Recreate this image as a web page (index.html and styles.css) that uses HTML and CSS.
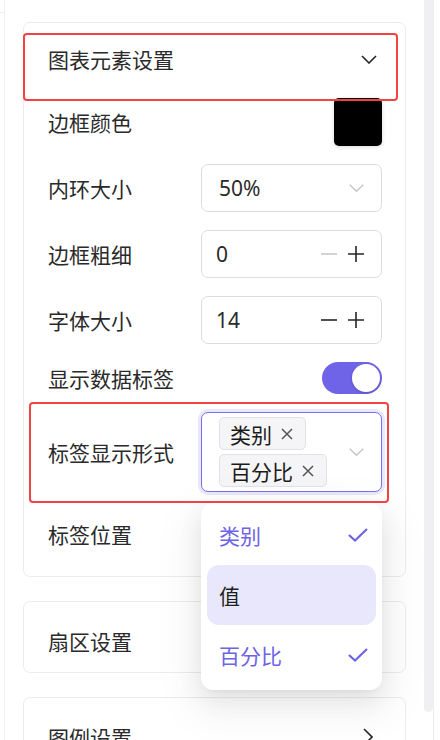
FILE: index.html
```html
<!DOCTYPE html>
<html lang="zh-CN">
<head>
<meta charset="utf-8">
<title>图表元素设置</title>
<link rel="stylesheet" href="styles.css">
</head>
<body>
<div class="app">
  <div class="gutter"></div>
  <main class="panel">
    <section class="card card-open">
      <div class="mark mark-head"></div>
      <div class="mark mark-format"></div>
      <header class="card-head">
        <span>图表元素设置</span>
        <svg class="chev-down" width="16" height="9" viewBox="0 0 16 9"><path d="M1 1 L8 8 L15 1" fill="none" stroke="#262626" stroke-width="1.6"/></svg>
      </header>
      <div class="card-body">
        <div class="row">
          <span class="label">边框颜色</span>
          <span class="swatch"></span>
        </div>
        <div class="row">
          <span class="label">内环大小</span>
          <div class="control select">
            <span>50%</span>
            <svg width="15" height="8" viewBox="0 0 15 8"><path d="M0.7 0.7 L7.5 7.3 L14.3 0.7" fill="none" stroke="#c4c4c4" stroke-width="1.3"/></svg>
          </div>
        </div>
        <div class="row">
          <span class="label">边框粗细</span>
          <div class="control stepper">
            <span>0</span>
            <span class="btns">
              <svg width="16" height="16" viewBox="0 0 16 16"><path d="M0 8 H16" stroke="#c8c8c8" stroke-width="1.6"/></svg>
              <svg width="16" height="16" viewBox="0 0 16 16"><path d="M0 8 H16 M8 0 V16" stroke="#262626" stroke-width="1.6"/></svg>
            </span>
          </div>
        </div>
        <div class="row">
          <span class="label">字体大小</span>
          <div class="control stepper">
            <span>14</span>
            <span class="btns">
              <svg width="16" height="16" viewBox="0 0 16 16"><path d="M0 8 H16" stroke="#262626" stroke-width="1.6"/></svg>
              <svg width="16" height="16" viewBox="0 0 16 16"><path d="M0 8 H16 M8 0 V16" stroke="#262626" stroke-width="1.6"/></svg>
            </span>
          </div>
        </div>
        <div class="row row-toggle">
          <span class="label">显示数据标签</span>
          <span class="switch"><span class="knob"></span></span>
        </div>
        <div class="row row-multi">
          <span class="label">标签显示形式</span>
          <div class="multi-wrap">
            <div class="control multi">
              <div class="tags">
                <span class="tag">类别<svg width="12" height="12" viewBox="0 0 12 12"><path d="M1 1 L11 11 M11 1 L1 11" stroke="#555" stroke-width="1.5"/></svg></span>
                <span class="tag">百分比<svg width="12" height="12" viewBox="0 0 12 12"><path d="M1 1 L11 11 M11 1 L1 11" stroke="#555" stroke-width="1.5"/></svg></span>
              </div>
              <svg width="15" height="8" viewBox="0 0 15 8"><path d="M0.7 0.7 L7.5 7.3 L14.3 0.7" fill="none" stroke="#c4c4c4" stroke-width="1.3"/></svg>
            </div>
            <ul class="dropdown">
              <li class="opt opt-on">类别<svg width="20" height="14" viewBox="0 0 20 14"><path d="M1 7 L7 12.5 L19 1" fill="none" stroke="#6e62e5" stroke-width="2.2"/></svg></li>
              <li class="opt opt-hover">值</li>
              <li class="opt opt-on">百分比<svg width="20" height="14" viewBox="0 0 20 14"><path d="M1 7 L7 12.5 L19 1" fill="none" stroke="#6e62e5" stroke-width="2.2"/></svg></li>
            </ul>
          </div>
        </div>
        <div class="row">
          <span class="label">标签位置</span>
        </div>
      </div>
    </section>
    <section class="card card-closed">
      <span>扇区设置</span>
    </section>
    <section class="card card-closed">
      <span>图例设置</span>
      <svg width="10" height="18" viewBox="0 0 10 18"><path d="M1 1 L9 9 L1 17" fill="none" stroke="#262626" stroke-width="1.6"/></svg>
    </section>
  </main>
  <div class="scroll"><div class="thumb"></div></div>
</div>
</body>
</html>
```

FILE: styles.css
```css
* { box-sizing: border-box; }
html, body { margin: 0; padding: 0; background: #fff; }
body {
  font-family: "Noto Sans", "Noto Sans CJK SC", sans-serif;
  font-size: 21px;
  color: #2a2a2a;
}
.app {
  display: flex;
  width: 440px;
  height: 740px;
  overflow: hidden;
}
.gutter {
  width: 4px;
  flex: none;
  margin-top: 12px;
  height: 1px;
  border-top: 1px solid #ececec;
}
.panel {
  width: 420px;
  flex: none;
  border-left: 1px solid #efefef;
  padding: 22px 18px 0 18px;
  display: flex;
  flex-direction: column;
  gap: 24px;
}
.scroll {
  width: 10px;
  flex: none;
  border-right: 1px solid #ededed;
}
.thumb {
  width: 9px;
  height: 712px;
  background: #f0f0f3;
  border-radius: 0 0 5px 5px;
}
.card {
  position: relative;
  flex: none;
  background: #fff;
  border: 1px solid #ececec;
  border-radius: 7px;
}
.mark {
  position: absolute;
  border: 2.5px solid #f44242;
  border-radius: 4px;
  z-index: 5;
  pointer-events: none;
}
.mark-head { left: -1px; top: 10px; width: 375px; height: 68px; }
.mark-format { left: 5px; top: 379px; width: 360px; height: 101px; }
.card-head {
  height: 75px;
  display: flex;
  align-items: center;
  justify-content: space-between;
  padding: 0 28px 3px 24px;
}
.card-body {
  display: flex;
  flex-direction: column;
  gap: 18px;
  padding: 0 23px 18px 24px;
}
.row {
  height: 48px;
  display: flex;
  align-items: center;
  justify-content: space-between;
}
.row-toggle { height: 32px; }
.row-multi { height: 80px; }
.label { white-space: nowrap; }
.swatch {
  width: 48px;
  height: 48px;
  background: #000;
  border-radius: 5px;
  box-shadow: 0 1px 4px rgba(0,0,0,0.15);
}
.control {
  width: 181px;
  border: 1px solid #dcdcdc;
  border-radius: 7px;
  background: #fff;
}
.select {
  height: 48px;
  display: flex;
  align-items: center;
  justify-content: space-between;
  padding: 0 17px;
}
.stepper {
  height: 48px;
  display: flex;
  align-items: center;
  justify-content: space-between;
  padding: 0 17px 0 14px;
}
.btns { display: flex; gap: 11px; align-items: center; }
.btns svg { display: block; }
.switch {
  width: 60px;
  height: 32px;
  border-radius: 16px;
  background: #6f63e8;
  display: flex;
  justify-content: flex-end;
  align-items: center;
  padding: 0 2px;
}
.knob {
  width: 28px;
  height: 28px;
  border-radius: 50%;
  background: #fff;
  box-shadow: 0 1px 3px rgba(0,0,0,0.2);
}
.multi-wrap { position: relative; width: 181px; }
.multi {
  height: 80px;
  border-color: #7b70ea;
  box-shadow: 0 0 0 3px rgba(110,98,229,0.15);
  display: flex;
  align-items: center;
  padding: 4px 17px 4px 17px;
  gap: 8px;
}
.tags {
  flex: 1;
  display: flex;
  flex-wrap: wrap;
  gap: 4px;
  align-self: flex-start;
}
.tag {
  height: 33px;
  display: inline-flex;
  align-items: center;
  padding: 0 12px 0 10px;
  background: #f5f5f7;
  border: 1px solid #e2e2e5;
  border-radius: 5px;
  color: #1a1a1a;
  white-space: nowrap;
}
.tag svg { margin-left: 9px; }
.dropdown {
  position: absolute;
  top: 91px;
  left: 0;
  width: 181px;
  margin: 0;
  padding: 2px 6px 5px;
  list-style: none;
  background: #fff;
  border-radius: 12px;
  z-index: 4;
  box-shadow: 0 9px 24px rgba(0,0,0,0.08), 0 4px 9px -6px rgba(0,0,0,0.12), 0 14px 42px 12px rgba(0,0,0,0.05);
}
.opt {
  height: 60px;
  display: flex;
  align-items: center;
  justify-content: space-between;
  padding: 0 8px 0 12px;
  border-radius: 12px;
}
.opt-on { color: #6e62e5; }
.opt-hover { background: #e9e7fc; color: #1f1f1f; }
.card-closed {
  height: 72px;
  display: flex;
  align-items: center;
  justify-content: space-between;
  padding: 7px 32px 0 24px;
}
```
